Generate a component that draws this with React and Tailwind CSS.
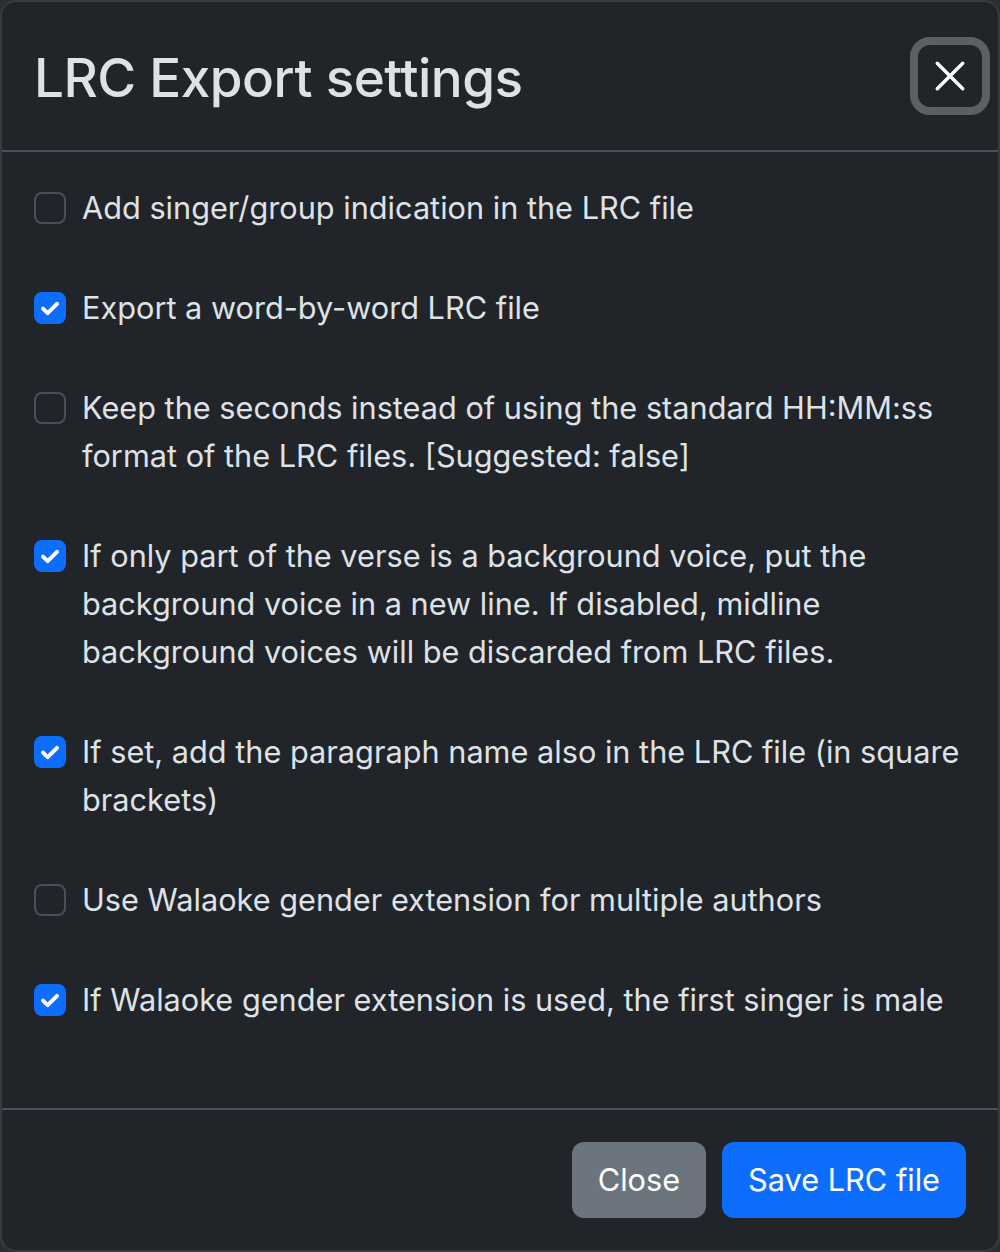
import { useState } from 'react';

const OPTIONS = [
  { id: 'singer', label: 'Add singer/group indication in the LRC file', on: false },
  { id: 'wbw', label: 'Export a word-by-word LRC file', on: true },
  { id: 'seconds', label: 'Keep the seconds instead of using the standard HH:MM:ss format of the LRC files. [Suggested: false]', on: false },
  { id: 'bgvoice', label: 'If only part of the verse is a background voice, put the background voice in a new line. If disabled, midline background voices will be discarded from LRC files.', on: true },
  { id: 'para', label: 'If set, add the paragraph name also in the LRC file (in square brackets)', on: true },
  { id: 'walaoke', label: 'Use Walaoke gender extension for multiple authors', on: false },
  { id: 'male', label: 'If Walaoke gender extension is used, the first singer is male', on: true },
];

function Check({ checked, onChange, label }) {
  return (
    <label className="flex items-start gap-4 cursor-pointer">
      <button
        type="button"
        onClick={onChange}
        className={`mt-2 w-8 h-8 shrink-0 rounded-lg flex items-center justify-center border-2 ${checked ? 'bg-[#0d6efd] border-[#0d6efd]' : 'bg-transparent border-[#495057]'}`}
      >
        {checked && (
          <svg className="w-7 h-7" viewBox="0 0 20 20" fill="none"><path d="M5 10.5l3.3 3.2l6.7-6.7" stroke="#fff" strokeWidth="2.8" strokeLinecap="round" strokeLinejoin="round" /></svg>
        )}
      </button>
      <span className="leading-[48px]">{label}</span>
    </label>
  );
}

export default function App() {
  const [opts, setOpts] = useState(() => Object.fromEntries(OPTIONS.map((o) => [o.id, o.on])));

  return (
    <div className="w-[1000px] h-[1252px] bg-[#2b2e31] font-['Inter','Noto_Sans',sans-serif] text-[#dee2e6]">
      <div className="h-full flex flex-col bg-[#212529] border-2 border-[#383b3f] rounded-[16px]">
        {/* header */}
        <div className="h-[150px] shrink-0 flex items-center justify-between pl-[32px] pr-[8px] border-b-2 border-[#495057]">
          <h2 className="pt-1 text-[53px] font-medium leading-none tracking-[-0.5px]">LRC Export settings</h2>
          <button type="button" aria-label="Close" className="w-[80px] h-[78px] rounded-[20px] border-[8px] border-[#5b6064] flex items-center justify-center">
            <svg className="w-[34px] h-[34px]" viewBox="0 0 16 16" fill="none"><path d="M2 2l12 12M14 2L2 14" stroke="#fff" strokeWidth="1.6" strokeLinecap="round" /></svg>
          </button>
        </div>

        {/* body */}
        <div className="flex-1 px-[32px] pt-[32px] flex flex-col gap-[52px] text-[30.7px]">
          {OPTIONS.map((o) => (
            <Check key={o.id} label={o.label} checked={opts[o.id]} onChange={() => setOpts({ ...opts, [o.id]: !opts[o.id] })} />
          ))}
        </div>

        {/* footer */}
        <div className="h-[142px] shrink-0 border-t-2 border-[#495057] flex items-start justify-end gap-4 pt-[32px] pr-[32px]">
          <button type="button" className="h-[76px] px-[26px] rounded-[12px] bg-[#6c757d] text-white text-[30.7px]">Close</button>
          <button type="button" className="h-[76px] px-[26px] rounded-[12px] bg-[#0d6efd] text-white text-[30.7px]">Save LRC file</button>
        </div>
      </div>
    </div>
  );
}
